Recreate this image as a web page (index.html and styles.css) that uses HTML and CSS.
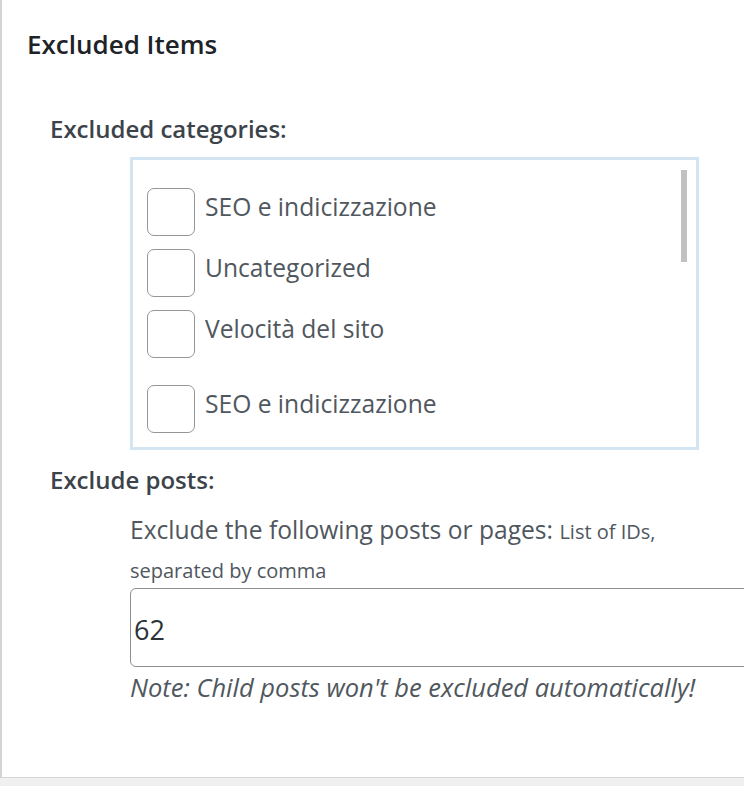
FILE: index.html
```html
<!DOCTYPE html>
<html lang="it">
<head>
<meta charset="utf-8">
<title>Excluded Items</title>
<link rel="stylesheet" href="styles.css">
</head>
<body>
<div class="panel">
  <h2 class="panel-title">Excluded Items</h2>

  <div class="field">
    <div class="field-label">Excluded categories:</div>
    <div class="cat-box">
      <ul class="cat-list">
        <li class="cat-item"><span class="cb"></span><span class="cat-name">SEO e indicizzazione</span></li>
        <li class="cat-item"><span class="cb"></span><span class="cat-name">Uncategorized</span></li>
        <li class="cat-item"><span class="cb"></span><span class="cat-name">Velocità del sito</span></li>
        <li class="cat-item cat-item--sep"><span class="cb"></span><span class="cat-name">SEO e indicizzazione</span></li>
      </ul>
      <div class="scroll-thumb"></div>
    </div>
  </div>

  <div class="field field--posts">
    <div class="field-label field-label--posts">Exclude posts:</div>
    <div class="posts-body">
      <p class="desc"><span class="desc-main">Exclude the following posts or pages:</span> <small class="desc-small">List of IDs,</small> <small class="desc-small">separated by comma</small></p>
      <input class="text-input" type="text" value="62">
      <p class="note">Note: Child posts won't be excluded automatically!</p>
    </div>
  </div>
</div>
</body>
</html>
```

FILE: styles.css
```css
html, body {
  margin: 0;
  padding: 0;
  overflow: hidden;
}
body {
  background: #f0f0f1;
  font-family: "Open Sans", "Noto Sans", sans-serif;
  color: #50575e;
}
.panel {
  box-sizing: border-box;
  width: 1000px;
  height: 778px;
  background: #fff;
  border-left: 2px solid #d3d3d8;
  border-bottom: 1px solid #d3d4d7;
  padding-top: 26px;
  overflow: hidden;
}
.panel-title {
  margin: 0 0 0 25px;
  font-size: 26px;
  line-height: 36px;
  font-weight: 600;
  color: #1d2327;
}
.field-label {
  margin: 51px 0 0 48px;
  font-size: 24px;
  line-height: 32px;
  font-weight: 600;
  color: #3c434a;
}
.cat-box {
  position: relative;
  box-sizing: border-box;
  width: 569px;
  height: 293px;
  margin: 12px 0 0 128px;
  border: 3px solid #d3e5f3;
  overflow: hidden;
}
.cat-list {
  list-style: none;
  margin: 0;
  padding: 28px 0 0 14px;
  display: flex;
  flex-direction: column;
  gap: 13px;
}
.cat-item {
  display: flex;
  align-items: flex-start;
  gap: 10px;
}
.cat-item--sep {
  margin-top: 14px;
}
.cb {
  box-sizing: border-box;
  width: 48px;
  height: 48px;
  flex: none;
  border: 1.5px solid #949699;
  border-radius: 7px;
  background: #fff;
}
.cat-name {
  font-size: 24.6px;
  line-height: 38px;
  color: #50575e;
}
.scroll-thumb {
  position: absolute;
  left: 548px;
  top: 10px;
  width: 6px;
  height: 92px;
  background: #c1c1c1;
}
.field-label--posts {
  margin-top: 14px;
}
.posts-body {
  margin-left: 128px;
}
.desc {
  margin: 14px 0 0 0;
  width: 600px;
  font-size: 24.6px;
  line-height: 39px;
  color: #50575e;
}
.desc-small {
  font-size: 20px;
  line-height: 1;
  white-space: nowrap;
}
.text-input {
  display: block;
  box-sizing: border-box;
  width: 760px;
  height: 79px;
  margin: 0;
  padding: 4px 3px 0;
  border: 1px solid #8c8f94;
  border-radius: 6px;
  font-family: "Open Sans", "Noto Sans", sans-serif;
  font-size: 27px;
  color: #2c3338;
  background: #fff;
  outline: none;
}
.note {
  margin: 4px 0 0 0;
  font-size: 25.5px;
  line-height: 32px;
  font-style: italic;
  color: #50575e;
}
```
